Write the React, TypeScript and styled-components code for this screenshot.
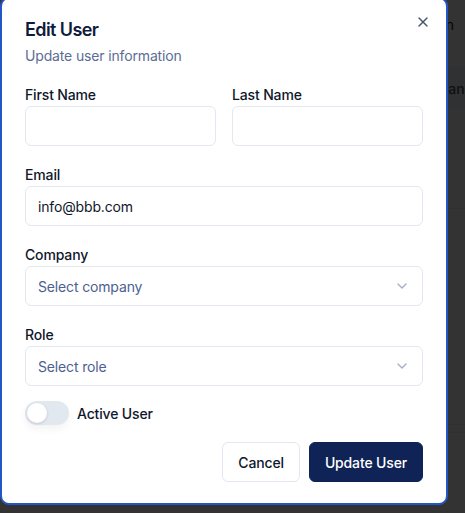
import React from 'react'
import styled, { createGlobalStyle } from 'styled-components'
import { X, ChevronDown } from 'lucide-react'

const GlobalStyle = createGlobalStyle`
  html, body {
    margin: 0;
    padding: 0;
    overflow: hidden;
    background: #ffffff;
  }
  * {
    box-sizing: border-box;
  }
  body {
    font-family: Inter, "Noto Sans", "Liberation Sans", sans-serif;
    color: #0f172a;
    letter-spacing: -0.15px;
  }
`

const Page = styled.div`
  width: 100vw;
  height: 100vh;
  position: relative;
  background: #ffffff;
`

const TopBar = styled.div`
  height: 48px;
  display: flex;
  align-items: center;
  justify-content: flex-end;
  font-size: 14px;
  color: #0f172a;
`

const TopBarText = styled.span`
  margin-right: 11px;
`

const TableHead = styled.div`
  margin-top: 19px;
  height: 42px;
  display: grid;
  grid-template-columns: 160px 249px 1fr;
  align-items: center;
  background: #f1f5f9;
  font-size: 14px;
  font-weight: 500;
  color: #475569;
  white-space: nowrap;
  overflow: hidden;
`

const TableRow = styled.div<{ $h: number }>`
  height: ${(p) => p.$h}px;
  border-bottom: 1px solid #e2e8f0;
`

const Overlay = styled.div`
  position: fixed;
  inset: 0;
  background: rgba(0, 0, 0, 0.8);
`

const Dialog = styled.div`
  position: fixed;
  left: 0;
  top: -3px;
  width: 448px;
  background: #ffffff;
  border: 2px solid #2357c6;
  border-radius: 9px;
  padding: 22px 23px 21px;
  display: flex;
  flex-direction: column;
`

const CloseButton = styled.button`
  position: absolute;
  top: 15px;
  right: 15px;
  width: 16px;
  height: 16px;
  padding: 0;
  border: none;
  background: transparent;
  color: #475569;
  display: flex;
  align-items: center;
  justify-content: center;
  cursor: pointer;
`

const Header = styled.div`
  display: flex;
  flex-direction: column;
  gap: 7px;
`

const Title = styled.h2`
  margin: 0;
  font-size: 18px;
  line-height: 18px;
  font-weight: 600;
  letter-spacing: -0.6px;
  color: #0f1b3d;
`

const Description = styled.p`
  margin: 0;
  font-size: 14px;
  line-height: 20px;
  color: #5b6d94;
`

const Form = styled.div`
  margin-top: 22px;
  display: flex;
  flex-direction: column;
  gap: 22px;
`

const Row = styled.div`
  display: grid;
  grid-template-columns: 1fr 1fr;
  gap: 16px;
`

const Field = styled.div`
  display: flex;
  flex-direction: column;
  gap: 4px;
`

const Label = styled.label`
  font-size: 14px;
  line-height: 14px;
  font-weight: 500;
  color: #0f172a;
`

const Input = styled.input`
  height: 40px;
  width: 100%;
  border: 1px solid #e2e8f0;
  border-radius: 6px;
  padding: 0 12px;
  font-family: inherit;
  font-size: 14px;
  letter-spacing: -0.15px;
  color: #0f172a;
  background: #ffffff;
  outline: none;
`

const SelectBox = styled.div`
  height: 40px;
  width: 100%;
  border: 1px solid #e2e8f0;
  border-radius: 6px;
  padding: 0 12px;
  display: flex;
  align-items: center;
  justify-content: space-between;
  font-size: 14px;
  color: #4c6191;
  background: #ffffff;
`

const Chevron = styled(ChevronDown)`
  opacity: 0.5;
  color: #4c6191;
`

const SwitchRow = styled.div`
  margin-top: 15px;
  display: flex;
  align-items: center;
  gap: 8px;
`

const SwitchTrack = styled.div`
  width: 44px;
  height: 24px;
  border-radius: 12px;
  background: #e2e8f0;
  padding: 2px;
  display: flex;
  align-items: center;
  box-shadow: 0 4px 8px rgba(15, 23, 42, 0.05);
`

const SwitchThumb = styled.div`
  width: 20px;
  height: 20px;
  border-radius: 50%;
  background: #ffffff;
  box-shadow: 0 1px 3px rgba(15, 23, 42, 0.15);
`

const SwitchLabel = styled.span`
  font-size: 14px;
  font-weight: 500;
  color: #0f172a;
`

const Footer = styled.div`
  margin-top: 17px;
  display: flex;
  justify-content: flex-end;
  gap: 9px;
`

const Button = styled.button<{ $primary?: boolean }>`
  height: 40px;
  padding: 0 15px;
  border-radius: 6px;
  font-family: inherit;
  font-size: 14px;
  font-weight: 500;
  letter-spacing: -0.15px;
  cursor: pointer;
  border: 1px solid ${(p) => (p.$primary ? '#0f2356' : '#e2e8f0')};
  background: ${(p) => (p.$primary ? '#0f2356' : '#ffffff')};
  color: ${(p) => (p.$primary ? '#ffffff' : '#0f172a')};
`

export default function App() {
  return (
    <>
      <GlobalStyle />
      <Page>
        <TopBar>
          <TopBarText>Admin</TopBarText>
        </TopBar>
        <TableHead>
          <span />
          <span />
          <span>Companies</span>
        </TableHead>
        <TableRow $h={100} />
        <TableRow $h={216} />
        <TableRow $h={8} />
      </Page>
      <Overlay />
      <Dialog role="dialog">
        <Header>
          <Title>Edit User</Title>
          <Description>Update user information</Description>
        </Header>
        <Form>
          <Row>
            <Field>
              <Label>First Name</Label>
              <Input defaultValue="" />
            </Field>
            <Field>
              <Label>Last Name</Label>
              <Input defaultValue="" />
            </Field>
          </Row>
          <Field>
            <Label>Email</Label>
            <Input defaultValue="info@bbb.com" />
          </Field>
          <Field>
            <Label>Company</Label>
            <SelectBox>
              <span>Select company</span>
              <Chevron size={16} />
            </SelectBox>
          </Field>
          <Field>
            <Label>Role</Label>
            <SelectBox>
              <span>Select role</span>
              <Chevron size={16} />
            </SelectBox>
          </Field>
        </Form>
        <SwitchRow>
          <SwitchTrack>
            <SwitchThumb />
          </SwitchTrack>
          <SwitchLabel>Active User</SwitchLabel>
        </SwitchRow>
        <Footer>
          <Button>Cancel</Button>
          <Button $primary>Update User</Button>
        </Footer>
        <CloseButton aria-label="Close">
          <X size={16} />
        </CloseButton>
      </Dialog>
    </>
  )
}
